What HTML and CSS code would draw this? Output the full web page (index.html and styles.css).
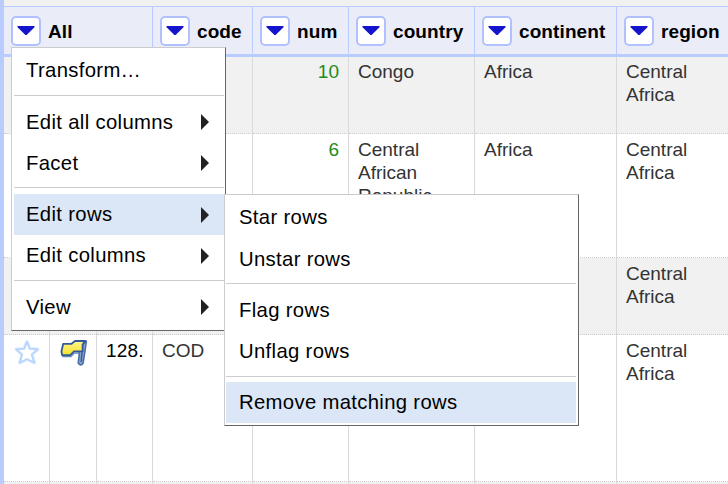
FILE: index.html
```html
<!DOCTYPE html>
<html lang="en">
<head>
<meta charset="utf-8">
<title>Rows</title>
<link rel="stylesheet" href="styles.css">
</head>
<body>
<svg class="defs" width="0" height="0"><symbol id="down" viewBox="0 0 30 30"><path d="M6.5 11.2V10h17v1.2L15.6 19h-1.2z" fill="#1414cc"/></symbol></svg>
<main class="grid">
  <div class="row header">
    <div class="cell all"><span class="drop"><svg><use href="#down"/></svg></span><span class="name">All</span></div>
    <div class="cell"><span class="drop"><svg><use href="#down"/></svg></span><span class="name">code</span></div>
    <div class="cell"><span class="drop"><svg><use href="#down"/></svg></span><span class="name">num</span></div>
    <div class="cell"><span class="drop"><svg><use href="#down"/></svg></span><span class="name">country</span></div>
    <div class="cell"><span class="drop"><svg><use href="#down"/></svg></span><span class="name">continent</span></div>
    <div class="cell"><span class="drop"><svg><use href="#down"/></svg></span><span class="name">region</span></div>
  </div>
  <div class="row short odd first">
    <div class="cell"></div><div class="cell"></div><div class="cell"></div><div class="cell"></div>
    <div class="cell num">10</div><div class="cell">Congo</div><div class="cell">Africa</div><div class="cell">Central Africa</div>
  </div>
  <div class="row medium">
    <div class="cell"></div><div class="cell"></div><div class="cell"></div><div class="cell"></div>
    <div class="cell num">6</div><div class="cell">Central African Republic</div><div class="cell">Africa</div><div class="cell">Central Africa</div>
  </div>
  <div class="row short odd">
    <div class="cell"></div><div class="cell"></div><div class="cell"></div><div class="cell"></div>
    <div class="cell"></div><div class="cell"></div><div class="cell"></div><div class="cell">Central Africa</div>
  </div>
  <div class="row tall">
    <div class="cell icon"><svg class="star" viewBox="0 0 26 27"><path d="M13 2.8 15.8 9.9 23.6 10.3 17.7 15.4 20.2 23.6 13 20 5.9 23.6 8.1 15.4 2.4 10.3 10.2 9.9Z" fill="#fff" stroke="#dceaff" stroke-width="3.6" stroke-linejoin="round"/><path d="M13 2.8 15.8 9.9 23.6 10.3 17.7 15.4 20.2 23.6 13 20 5.9 23.6 8.1 15.4 2.4 10.3 10.2 9.9Z" fill="#fff" stroke="#b8d6fc" stroke-width="1.9" stroke-linejoin="round"/></svg></div>
    <div class="cell icon"><svg class="flag" viewBox="0 0 28 28"><defs><linearGradient id="gold" x2="0" y2="1"><stop stop-color="#fff58a"/><stop offset="1" stop-color="#f4e22d"/></linearGradient></defs><path d="M18.6 8.5 26.4 2 25 12 23 24.5q-2.6 3-4.8-.5l1-8z" fill="#8ba8cd" stroke="#4a70a8" stroke-width="1.6" stroke-linejoin="round"/><path d="M22.4 8 21.2 23" stroke="#3a609c" stroke-width="1.5"/><path d="M3.2 4.8H11.5L15 2H25.2L22.6 5.6V12.4H14L10.4 16.2H2.2L1.4 12.5Z" fill="url(#gold)" stroke="#34599a" stroke-width="1.8" stroke-linejoin="round"/><path d="M2.2 17.6H11L14.4 14H19" fill="none" stroke="#6487b8" stroke-width="1.3"/></svg></div>
    <div class="cell index">128.</div><div class="cell">COD</div>
    <div class="cell"></div><div class="cell"></div><div class="cell"></div><div class="cell">Central Africa</div>
  </div>
  <div class="row last odd">
    <div class="cell"></div><div class="cell"></div><div class="cell"></div><div class="cell"></div>
    <div class="cell"></div><div class="cell"></div><div class="cell"></div><div class="cell"></div>
  </div>
</main>
<nav class="menu main-menu">
  <div class="item">Transform…</div>
  <hr>
  <div class="item parent">Edit all columns</div>
  <div class="item parent">Facet</div>
  <hr>
  <div class="item parent active">Edit rows</div>
  <div class="item parent">Edit columns</div>
  <hr>
  <div class="item parent">View</div>
</nav>
<nav class="menu sub-menu">
  <div class="item">Star rows</div>
  <div class="item">Unstar rows</div>
  <hr>
  <div class="item">Flag rows</div>
  <div class="item">Unflag rows</div>
  <hr>
  <div class="item active">Remove matching rows</div>
</nav>
</body>
</html>
```
FILE: styles.css
```css
* { box-sizing: border-box; }
body {
  margin: 0;
  width: 728px;
  height: 484px;
  overflow: hidden;
  background: #f1f1f1;
  font-family: "Liberation Sans", Arial, sans-serif;
}
.defs { position: absolute; }
.grid {
  height: 484px;
  padding-top: 6px;
  border-left: 4px solid #b9ccff;
  overflow: hidden;
}
.row {
  display: grid;
  grid-template-columns: 46px 47px 56px 100px 96px 126px 142px 111px;
  background: #fff;
}
.odd { background: #f1f1f1; }
.short { height: 77px; }
.medium { height: 124px; }
.tall { height: 147px; }
.last { height: 40px; }
.cell {
  border-right: 1px solid #d9d9d9;
  border-bottom: 1px dotted #ccc;
  padding: 4px 9px 0;
  font-size: 19px;
  line-height: 23px;
  color: #333;
  overflow: hidden;
}
.cell:last-child { border-right: 0; }
.first .cell { padding-top: 3px; }
.num { text-align: right; color: #228b22; }
.index { color: #000; letter-spacing: 0.2px; }
.header {
  height: 51px;
  background: #eaecf8;
  border-top: 1px solid #b9ccff;
  border-bottom: 3px solid #b9ccff;
}
.header .cell {
  display: flex;
  align-items: center;
  gap: 7px;
  padding: 0 0 0 7px;
  border-bottom: 0;
  border-right-color: #b9ccff;
  font-weight: bold;
  color: #000;
  letter-spacing: 0.1px;
}
.header .all { grid-column: span 3; }
.name { padding-top: 2px; }
.drop {
  width: 30px;
  height: 30px;
  flex: none;
  border: 2px solid #b1c1ff;
  border-radius: 5px;
  background: #fff;
}
.drop svg { display: block; width: 30px; height: 30px; margin: -2px; }
.icon { padding: 4px 0 0 10px; }
.icon svg { display: block; }
.star { width: 26px; height: 27px; }
.flag { width: 28px; height: 28px; }
.menu {
  position: absolute;
  background: #fff;
  border: 1px solid #ccc;
  border-right-color: #666;
  border-bottom-color: #666;
  font-size: 20.3px;
  letter-spacing: 0.33px;
  color: #000;
}
.main-menu { left: 11px; top: 47px; width: 215px; height: 284px; padding: 1.85px 1px 0 2px; }
.sub-menu { left: 224px; top: 194px; width: 355px; height: 232px; padding: 1.8px 2px 0 1px; }
.item {
  display: flex;
  align-items: center;
  justify-content: space-between;
  height: 41.2px;
  padding: 1px 15px 0 12px;
}
.sub-menu .item { padding-left: 13px; }
.active { background: #dbe7f7; }
.parent::after {
  content: "";
  border: 8px solid transparent;
  border-left: 8.5px solid #222;
  border-right: 0;
}
.menu hr {
  margin: 3.9px 0 5.2px;
  border: 0;
  height: 1px;
  background: #ccc;
}
```
